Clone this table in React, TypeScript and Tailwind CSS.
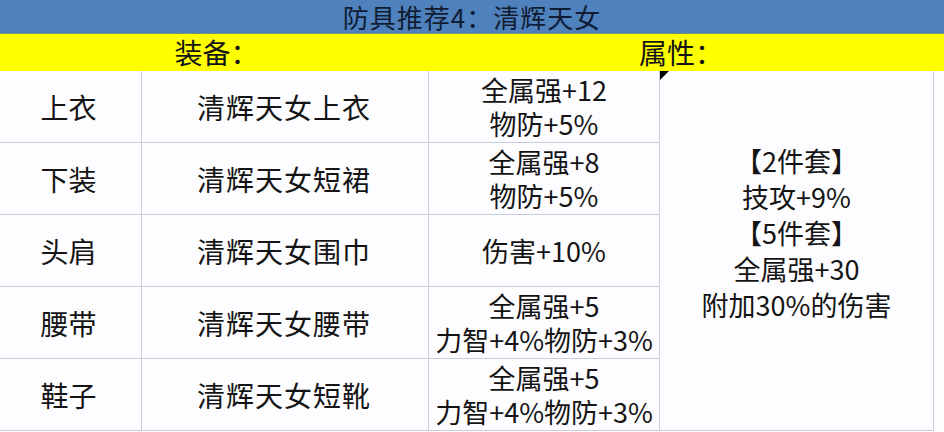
const rows = [
  { slot: "上衣", name: "清辉天女上衣", stats: ["全属强+12", "物防+5%"] },
  { slot: "下装", name: "清辉天女短裙", stats: ["全属强+8", "物防+5%"] },
  { slot: "头肩", name: "清辉天女围巾", stats: ["伤害+10%"] },
  { slot: "腰带", name: "清辉天女腰带", stats: ["全属强+5", "力智+4%物防+3%"] },
  { slot: "鞋子", name: "清辉天女短靴", stats: ["全属强+5", "力智+4%物防+3%"] },
];

const setBonus = ["【2件套】", "技攻+9%", "【5件套】", "全属强+30", "附加30%的伤害"];

export default function App() {
  return (
    <div
      className="w-[944px] h-[432px] overflow-hidden bg-[#fdfdff] text-[#141414]"
      style={{ fontFamily: '"Noto Sans CJK SC", "Noto Sans", sans-serif' }}
    >
      <div className="h-[33px] bg-[#4f81bd] flex items-center justify-center text-[26px] leading-[30px] text-[#101c33] tracking-[1px]">
        防具推荐4：清辉天女
      </div>

      <div className="h-[38px] bg-[#ffff00] border-t border-[#6f9a7a] flex text-[28px] leading-[36px]">
        <div className="w-[429px] flex justify-center pl-[4px]">装备：</div>
        <div className="w-[504px] flex justify-center">属性：</div>
      </div>

      <div className="flex">
        <div className="w-[659px] flex flex-col">
          {rows.map((r) => (
            <div key={r.slot} className="h-[72px] flex border-b border-[#c9cfdc]">
              <div className="w-[142px] border-r border-[#c9cfdc] flex items-center justify-center text-[28px] pr-[4px]">
                {r.slot}
              </div>
              <div className="w-[287px] border-r border-[#c9cfdc] flex items-center justify-center text-[28px] tracking-[1px] pr-[2px]">
                {r.name}
              </div>
              <div className="flex-1 flex flex-col items-center justify-center text-[27px] leading-[34px] whitespace-nowrap">
                {r.stats.map((s) => (
                  <div key={s}>{s}</div>
                ))}
              </div>
            </div>
          ))}
        </div>

        <div className="relative w-[275px] h-[360px] border-l border-r border-b border-[#c9cfdc] flex flex-col items-center justify-center pb-[36px] text-[27px] leading-[36px]">
          <div className="absolute left-0 top-0 w-0 h-0 border-t-[9px] border-r-[9px] border-t-black border-r-transparent" />
          {setBonus.map((s) => (
            <div key={s}>{s}</div>
          ))}
        </div>
      </div>
    </div>
  );
}
